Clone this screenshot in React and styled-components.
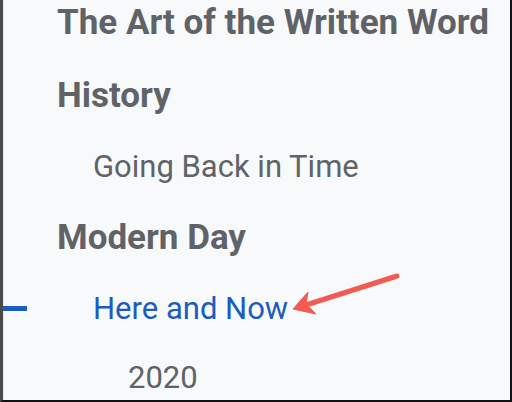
import React from "react";
import styled, { createGlobalStyle } from "styled-components";

const GlobalStyle = createGlobalStyle`
  html, body {
    margin: 0;
    padding: 0;
    background: #ffffff;
  }
  * {
    box-sizing: border-box;
  }
`;

const Frame = styled.div`
  position: relative;
  width: 512px;
  height: 402px;
  background: #f8f9fa;
  border-left: 3px solid #4a4a4a;
  border-right: 2px solid #111;
  border-bottom: 2px solid #111;
  overflow: hidden;
`;

const Outline = styled.ul`
  list-style: none;
  margin: 0;
  padding: 5px 0 0;
  display: flex;
  flex-direction: column;
  gap: 38px;
  border-left: 1px solid #e3e4e6;
  height: 100%;
  font-family: Roboto, "Liberation Sans", sans-serif;
`;

const Item = styled.li`
  position: relative;
  padding-left: ${(props) => props.indent}px;
  line-height: 1;
  color: ${(props) => (props.active ? "#1a5cc0" : "#5f6368")};
  font-size: ${(props) => (props.heading ? "35px" : "31px")};
  font-weight: ${(props) => (props.heading ? 700 : 400)};
  white-space: nowrap;
`;

const Marker = styled.span`
  position: absolute;
  left: -1px;
  top: 13px;
  width: 24px;
  height: 5px;
  background: #1a5cc0;
`;

const Arrow = styled.svg`
  position: absolute;
  left: 277px;
  top: 262px;
  width: 130px;
  height: 60px;
`;

const items = [
  { text: "The Art of the Written Word", indent: 53, heading: true },
  { text: "History", indent: 53, heading: true },
  { text: "Going Back in Time", indent: 89 },
  { text: "Modern Day", indent: 53, heading: true },
  { text: "Here and Now", indent: 89, active: true },
  { text: "2020", indent: 124 },
];

export default function App() {
  return (
    <>
      <GlobalStyle />
      <Frame>
        <Outline>
          {items.map((it, i) => (
            <Item
              key={i}
              indent={it.indent}
              heading={it.heading}
              active={it.active}
            >
              {it.active && <Marker />}
              {it.text}
            </Item>
          ))}
        </Outline>
        <Arrow viewBox="0 0 130 60">
          <path
            d="M117 14 L26 43"
            stroke="#f25a52"
            strokeWidth="5"
            strokeLinecap="round"
            fill="none"
          />
          <path d="M13 47 L28 30 L26 42 L36 52 Z" fill="#f25a52" strokeLinejoin="round" stroke="#f25a52" strokeWidth="1" />
        </Arrow>
      </Frame>
    </>
  );
}
